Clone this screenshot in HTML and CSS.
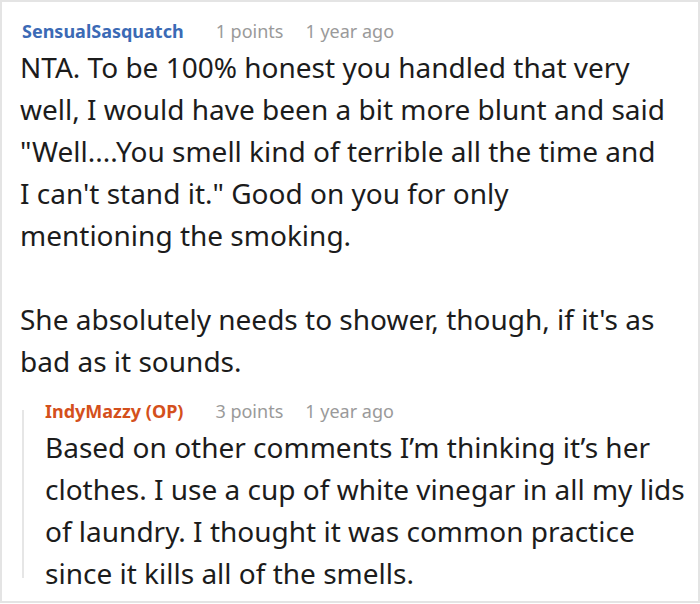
FILE: index.html
```html
<!DOCTYPE html>
<html>
<head>
<meta charset="utf-8">
<link rel="stylesheet" href="styles.css">
</head>
<body>
<div class="card">
  <div class="meta meta-top">
    <span class="name name-blue">SensualSasquatch</span>
    <span class="points">1 points</span>
    <span class="time">1 year ago</span>
  </div>
  <div class="text text-main">
    <p>NTA. To be 100% honest you handled that very well, I would have been a bit more blunt and said "Well....You smell kind of terrible all the time and I can't stand it." Good on you for only mentioning the smoking.</p>
    <p>She absolutely needs to shower, though, if it's as bad as it sounds.</p>
  </div>
  <div class="reply">
    <div class="rail"></div>
    <div class="reply-content">
      <div class="meta meta-reply">
        <span class="name name-orange">IndyMazzy (OP)</span>
        <span class="points">3 points</span>
        <span class="time">1 year ago</span>
      </div>
      <div class="text">
        <p>Based on other comments I’m thinking it’s her clothes. I use a cup of white vinegar in all my lids of laundry. I thought it was common practice since it kills all of the smells.</p>
      </div>
    </div>
  </div>
</div>
</body>
</html>
```
FILE: styles.css
```css
html, body {
  margin: 0;
  padding: 0;
  background: #ffffff;
}
.card {
  box-sizing: border-box;
  width: 700px;
  height: 603px;
  border: 2px solid #e4e4e4;
  padding: 15px 8px 0 18px;
  overflow: hidden;
  font-family: "Noto Sans", "Open Sans", sans-serif;
  color: #1c1c1c;
}
.meta {
  display: flex;
  align-items: baseline;
  font-size: 18px;
  line-height: 27px;
}
.meta-top {
  margin-bottom: 2px;
  padding-top: 1px;
  padding-left: 2px;
}
.meta-reply {
  margin-bottom: 1px;
}
.name {
  font-weight: 700;
}
.name-blue {
  color: #3b6ab5;
}
.name-orange {
  color: #d4501c;
}
.points {
  color: #9a9a9a;
  margin-left: 32px;
}
.time {
  color: #9a9a9a;
  margin-left: 22px;
}
.text p {
  margin: 0;
  font-size: 28px;
  line-height: 42px;
}
.text p + p {
  margin-top: 42px;
}
.text-main {
  width: 645px;
  margin-top: -1px;
}
.reply {
  display: flex;
  margin-top: 16px;
  margin-left: 2px;
}
.rail {
  flex: 0 0 2px;
  width: 2px;
  background: #e6e6e6;
  margin-top: 12px;
  margin-bottom: 16px;
}
.reply-content {
  flex: 1;
  padding-left: 21px;
}
```
